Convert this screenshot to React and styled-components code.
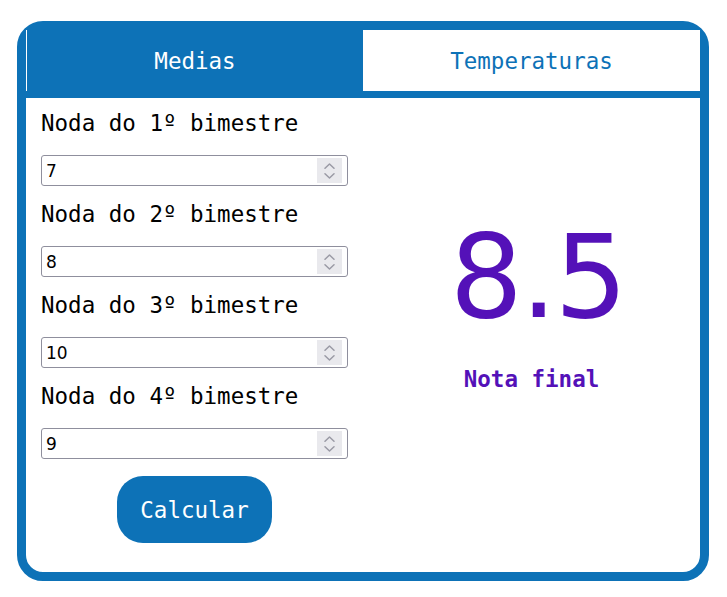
import React, { useState } from "react";
import styled, { createGlobalStyle } from "styled-components";

const Global = createGlobalStyle`
  html, body { margin: 0; padding: 0; background: #ffffff; }
  body { font-family: "DejaVu Sans Mono", monospace; }
  * { box-sizing: border-box; }
`;

const BLUE = "#0d72b7";
const PURPLE = "#5411b8";

const Card = styled.div`
  margin: 21px 18px 0 17px;
  width: 692px;
  height: 560px;
  border: 9px solid ${BLUE};
  border-radius: 26px;
  background: #fff;
  display: flex;
  flex-direction: column;
`;

const Tabs = styled.div`
  display: grid;
  grid-template-columns: 1fr 1fr;
  border-bottom: 7px solid ${BLUE};
`;

const Tab = styled.button`
  height: 61px;
  border: none;
  margin: 0;
  padding: 0;
  font-family: "DejaVu Sans Mono", monospace;
  font-size: 22.5px;
  background: ${(p) => (p.$active ? BLUE : "#fff")};
  color: ${(p) => (p.$active ? "#fff" : BLUE)};
  border-left: ${(p) => (p.$first ? "1px solid #fff" : "none")};
  cursor: pointer;
`;

const Body = styled.div`
  flex: 1;
  display: grid;
  grid-template-columns: 1fr 1fr;
`;

const Form = styled.div`
  display: flex;
  flex-direction: column;
  padding: 12px 15px 0;
`;

const Label = styled.label`
  display: block;
  font-size: 22.5px;
  line-height: 26px;
  color: #000;
  margin-bottom: 19px;
`;

const Field = styled.div`
  margin-bottom: 15px;
`;

const InputWrap = styled.div`
  position: relative;
`;

const NumberInput = styled.input`
  display: block;
  width: 100%;
  height: 31px;
  border: 1px solid #8f8f9d;
  border-radius: 3px;
  padding: 0 32px 0 4px;
  font-family: "DejaVu Sans", sans-serif;
  font-size: 17px;
  color: #000;
  background: #fff;
  -moz-appearance: textfield;
  &::-webkit-inner-spin-button,
  &::-webkit-outer-spin-button {
    -webkit-appearance: none;
    margin: 0;
  }
`;

const Spinner = styled.div`
  position: absolute;
  right: 6px;
  top: 3px;
  width: 25px;
  height: 25px;
  background: #e9e9ed;
  display: flex;
  flex-direction: column;
  align-items: center;
  justify-content: center;
  gap: 4px;
  pointer-events: none;
`;

const Chevron = ({ down }) => (
  <svg width="11" height="6" viewBox="0 0 11 6" aria-hidden="true">
    <path
      d={down ? "M1 0.8 L5.5 5 L10 0.8" : "M1 5.2 L5.5 1 L10 5.2"}
      fill="none"
      stroke="#9a9aa5"
      strokeWidth="1.5"
      strokeLinecap="round"
      strokeLinejoin="round"
    />
  </svg>
);

const Button = styled.button`
  align-self: center;
  margin-top: 2px;
  width: 155px;
  height: 67px;
  border: none;
  border-radius: 26px;
  background: ${BLUE};
  color: #fff;
  font-family: "DejaVu Sans Mono", monospace;
  font-size: 22.5px;
  cursor: pointer;
`;

const Result = styled.div`
  display: flex;
  flex-direction: column;
  align-items: center;
  padding-top: 112px;
  color: ${PURPLE};
`;

const Score = styled.div`
  font-family: "DejaVu Sans", sans-serif;
  font-size: 115px;
  line-height: 134px;
  letter-spacing: -2.5px;
  padding-left: 12px;
`;

const Caption = styled.div`
  margin-top: 22px;
  font-family: "DejaVu Sans Mono", monospace;
  font-weight: bold;
  font-size: 22.5px;
  line-height: 26px;
`;

export default function App() {
  const [notes, setNotes] = useState(["7", "8", "10", "9"]);
  const [tab, setTab] = useState(0);
  return (
    <>
      <Global />
      <Card>
        <Tabs>
          <Tab $first $active={tab === 0} onClick={() => setTab(0)}>Medias</Tab>
          <Tab $active={tab === 1} onClick={() => setTab(1)}>Temperaturas</Tab>
        </Tabs>
        <Body>
          <Form>
            {notes.map((n, i) => (
              <Field key={i}>
                <Label>Noda do {i + 1}º bimestre</Label>
                <InputWrap>
                  <NumberInput
                    type="number"
                    value={n}
                    onChange={(e) => {
                      const c = [...notes];
                      c[i] = e.target.value;
                      setNotes(c);
                    }}
                  />
                  <Spinner>
                    <Chevron />
                    <Chevron down />
                  </Spinner>
                </InputWrap>
              </Field>
            ))}
            <Button>Calcular</Button>
          </Form>
          <Result>
            <Score>8.5</Score>
            <Caption>Nota final</Caption>
          </Result>
        </Body>
      </Card>
    </>
  );
}
